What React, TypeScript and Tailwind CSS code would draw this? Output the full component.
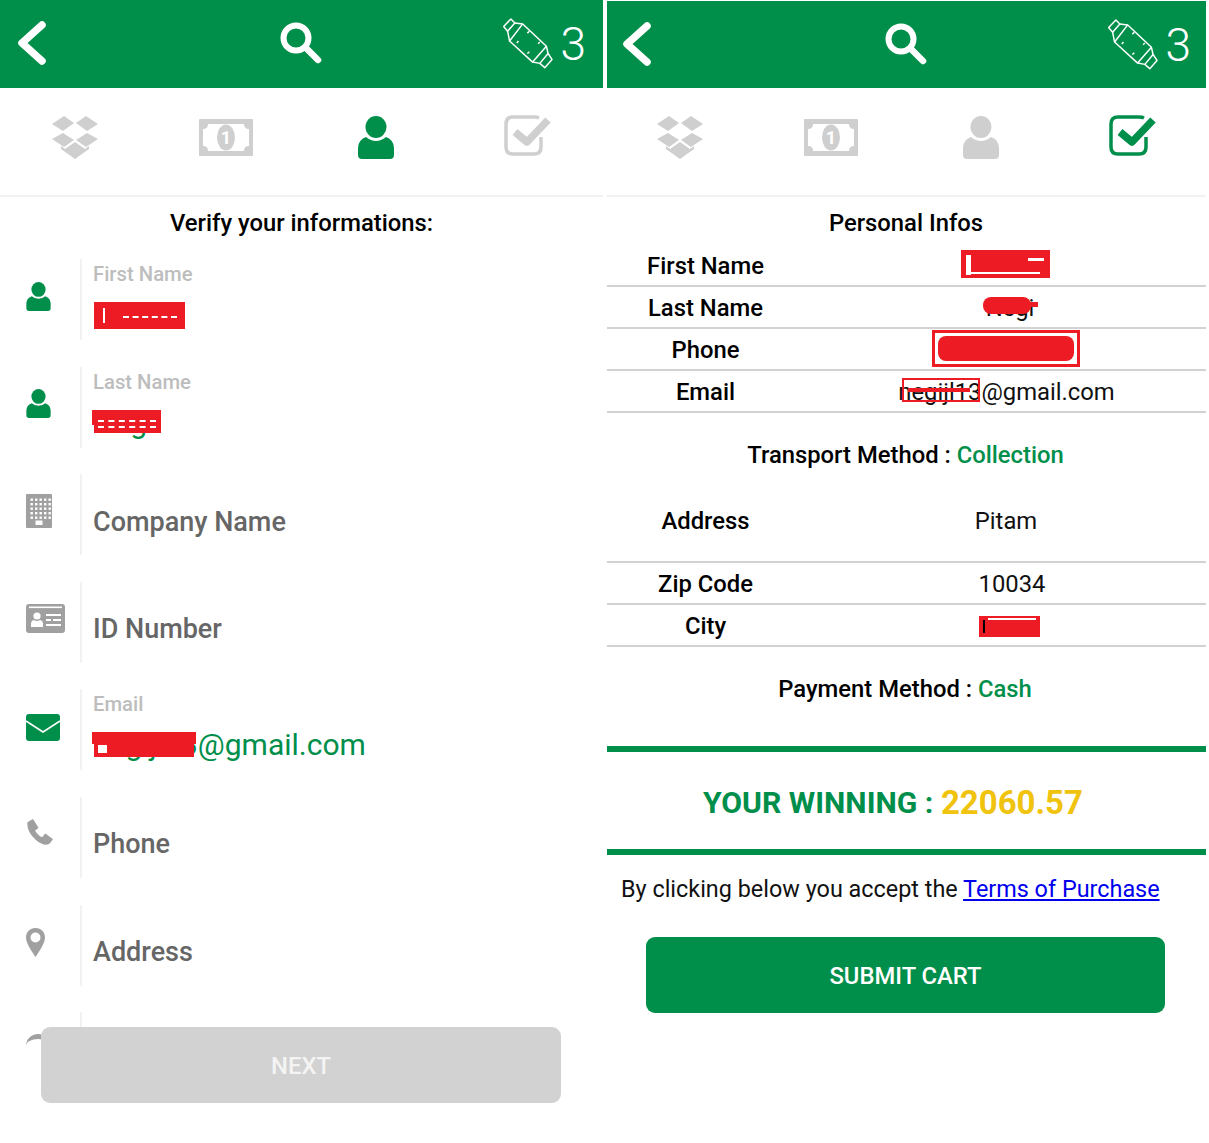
import React from 'react';

const Back = () => (
  <svg viewBox="0 0 28 44" className="w-[28px] h-[44px]" fill="none" stroke="#fff" strokeWidth="7.5" strokeLinecap="round" strokeLinejoin="round">
    <polyline points="24,4 4,22 24,40" />
  </svg>
);

const Search = () => (
  <svg viewBox="0 0 42 42" className="w-[42px] h-[42px] -ml-[1px]" fill="none" stroke="#fff">
    <circle cx="16" cy="16" r="12.5" strokeWidth="6" />
    <line x1="26" y1="26" x2="38" y2="38" strokeWidth="6.5" strokeLinecap="round" />
  </svg>
);

const Bottle = () => (
  <svg viewBox="38 50 152 156" className="w-[50px] h-[52px]" fill="none" stroke="#fff" strokeWidth="4.5" strokeLinejoin="round">
    <path d="M52 92 L40 78 L62 55 L74 67 Z" />
    <path d="M74 67 L98 70 L170 138 L175 160 L187 178 L165 203 L150 190 L128 186 L58 122 L52 92" />
    <path d="M58 122 L98 70 M128 186 L170 138 M150 190 L175 160" />
    <path d="M112 98 L118 92 M145 130 L150 125 M80 128 L85 122 M112 160 L118 155" />
  </svg>
);

const Dropbox = ({ color }: { color: string }) => (
  <svg viewBox="0 0 46 43" className="w-[46px] h-[43px]" fill={color}>
    <polygon points="12,0 22,7 11,15 0,8" />
    <polygon points="34,0 46,8 35,15 24,7" />
    <polygon points="11,17 22,24 12,31 0,23" />
    <polygon points="35,17 46,23 34,31 24,24" />
    <polygon points="23,26 33,33 37,30 37,33 23,43 9,33 9,30 13,33" />
  </svg>
);

const Money = ({ color }: { color: string }) => (
  <svg viewBox="0 0 54 37" className="w-[54px] h-[37px]">
    <rect width="54" height="37" rx="1" fill={color} />
    <path d="M9 5 H45 Q45 10 50 10 V27 Q45 27 45 32 H9 Q9 27 4 27 V10 Q9 10 9 5 Z" fill="#fff" />
    <ellipse cx="27" cy="18.5" rx="9" ry="13" fill={color} />
    <text x="27" y="25" textAnchor="middle" fontSize="18" fontWeight="700" fill="#fff" fontFamily="Roboto, sans-serif">1</text>
  </svg>
);

const User = ({ color, size = 'w-[36px] h-[43px]' }: { color: string; size?: string }) => (
  <svg viewBox="0 0 36 43" className={size} fill={color}>
    <ellipse cx="18" cy="11" rx="10.5" ry="11" />
    <path d="M4 43 Q0 43 0 39 V32 Q0 24 8 21 Q13 25 18 25 Q23 25 28 21 Q36 24 36 32 V39 Q36 43 32 43 Z" />
  </svg>
);

const Check = ({ color }: { color: string }) => (
  <svg viewBox="0 0 47 41" className="w-[47px] h-[41px]" fill="none" stroke={color} strokeLinejoin="round">
    <path d="M37 22 V32 Q37 39 30 39 H9 Q2 39 2 32 V9 Q2 2 9 2 H30 Q33 2 35 3" strokeWidth="3.5" />
    <polyline points="11,17 23,27 44,5" strokeWidth="7.5" />
  </svg>
);

const Building = () => (
  <svg viewBox="0 0 26 34" className="w-[26px] h-[34px]">
    <rect width="26" height="34" rx="1" fill="#a0a0a0" />
    {[5, 9.5, 14, 18.5, 23].map((y) =>
      [5, 9.5, 14, 18.5, 23].map((x) => <rect key={`${x}-${y}`} x={x - 0.5} y={y - 0.5} width="2.4" height="2.4" fill="#fff" />)
    )}
    <rect x="9.5" y="26.5" width="7" height="4.5" fill="#fff" />
  </svg>
);

const IdCard = () => (
  <svg viewBox="0 0 39 29" className="w-[39px] h-[29px]">
    <rect width="39" height="29" rx="3" fill="#a0a0a0" />
    <rect x="3" y="2.5" width="33" height="1.6" fill="#fff" />
    <circle cx="11" cy="12" r="3.6" fill="#fff" />
    <path d="M5 23 V20 Q5 16.5 8 16 Q11 18 14 16 Q17 16.5 17 20 V23 Z" fill="#fff" />
    <rect x="20" y="10" width="15" height="2" fill="#fff" />
    <rect x="20" y="15" width="5" height="2" fill="#fff" />
    <rect x="27" y="15" width="8" height="2" fill="#fff" />
    <rect x="20" y="20" width="15" height="2" fill="#fff" />
  </svg>
);

const Envelope = () => (
  <svg viewBox="0 0 34 27" className="w-[34px] h-[27px]">
    <rect width="34" height="27" rx="3" fill="#008f4b" />
    <polyline points="0,7 17,18 34,7" fill="none" stroke="#fff" strokeWidth="1.5" />
  </svg>
);

const Phone = () => (
  <svg viewBox="0 0 28 28" className="w-[27px] h-[27px]" fill="#a0a0a0" stroke="#a0a0a0" strokeLinejoin="round" strokeWidth="1.5">
    <path d="M2 4 L7 1 L12 9 L8.5 12 Q12 18 17 20 L20 16 L27 21 L24 25 Q19 28 11 21.5 Q2 14 2 4 Z" />
  </svg>
);

const Pin = () => (
  <svg viewBox="0 0 19 29" className="w-[19px] h-[29px]" fill="#a0a0a0">
    <path fillRule="evenodd" d="M9.5 0 C15 0 19 4 19 9.5 C19 15 13 24 9.5 29 C6 24 0 15 0 9.5 C0 4 4 0 9.5 0 Z M9.5 4.5 A5 5 0 1 0 9.5 14.5 A5 5 0 1 0 9.5 4.5 Z" />
  </svg>
);

const Header = () => (
  <div className="grid grid-cols-3 items-center w-[603px] h-full pb-[2px]">
    <div className="pl-[18px] flex">
      <Back />
    </div>
    <div className="flex justify-center">
      <Search />
    </div>
    <div className="flex justify-end items-center pr-[17px] gap-[7px] text-white">
      <Bottle />
      <span className="text-[46px] font-light leading-none mt-[2px]">3</span>
    </div>
  </div>
);

const Tabs = ({ active }: { active: 'user' | 'check' }) => (
  <div className="grid grid-cols-4 items-center w-[603px] h-[107px] pb-[8px]">
    <div className="flex justify-center">
      <Dropbox color="#cfcfcf" />
    </div>
    <div className="flex justify-center">
      <Money color="#cfcfcf" />
    </div>
    <div className="flex justify-center pr-[2px]">
      <User color={active === 'user' ? '#008f4b' : '#cfcfcf'} />
    </div>
    <div className="flex justify-center pb-[4px]">
      <Check color={active === 'check' ? '#008f4b' : '#cfcfcf'} />
    </div>
  </div>
);

const Field = ({
  icon,
  iconTop,
  label,
  placeholder,
  children,
}: {
  icon: React.ReactNode;
  iconTop: string;
  label?: string;
  placeholder?: string;
  children?: React.ReactNode;
}) => (
  <div className="flex h-[81px] mb-[26.6px]">
    <div className={`w-[80px] shrink-0 pl-[26px] ${iconTop}`}>{icon}</div>
    <div className="w-[2px] bg-[#f2f2f2]" />
    <div className="pl-[11px] flex-1">
      {label && <div className="text-[20.3px] leading-[24px] mt-[3px] mb-[1px] font-medium text-[#bdbdbd]">{label}</div>}
      {placeholder && <div className="text-[27px] leading-[32px] mt-[31.5px] font-medium text-[#666666]">{placeholder}</div>}
      {children}
    </div>
  </div>
);

const TableRow = ({ label, value, tall, offset = '' }: { label: string; value?: React.ReactNode; tall?: boolean; offset?: string }) => (
  <div className={`grid grid-cols-[197px_1fr] items-center border-b-2 border-[#d2d2d2] text-[23.8px] ${tall ? 'h-[64px] pb-[16px]' : 'h-[42px] pt-[3px]'}`}>
    <div className="text-center font-medium text-black">{label}</div>
    <div className={`relative text-center text-[#111111] ${offset}`}>{value}</div>
  </div>
);

const RedBar = ({ className }: { className: string }) => <div className={`absolute bg-[#ed1c24] ${className}`} />;

export default function App() {
  return (
    <div className="flex w-[1209px] h-[1143px] overflow-hidden bg-white font-['Roboto',sans-serif]">
      {/* left screen */}
      <div className="relative w-[603px] h-full shrink-0 overflow-hidden">
        <div className="h-[88px] bg-[#008f4b]">
          <Header />
        </div>
        <div className="border-b-2 border-[#f2f2f2]">
          <Tabs active="user" />
        </div>
        <div className="text-center text-[23.8px] font-medium text-black h-[62px] pt-[9px]">Verify your informations:</div>
        <Field icon={<User color="#008f4b" size="w-[25px] h-[29px]" />} iconTop="pt-[23px]" label="First Name">
          <div className="relative h-[53px]">
            <RedBar className="left-[1px] top-[15px] w-[91px] h-[27px]" />
            <div className="absolute left-[30px] top-[29px] w-[54px] border-t-2 border-dashed border-white" />
            <div className="absolute left-[10px] top-[21px] w-[2px] h-[15px] bg-white" />
          </div>
        </Field>
        <Field icon={<User color="#008f4b" size="w-[25px] h-[29px]" />} iconTop="pt-[22px]" label="Last Name">
          <div className="relative h-[53px] text-[30px] leading-[36px] text-[#008f4b] pt-[10px]">
            Negi
            <RedBar className="-left-[1px] top-[15px] w-[69px] h-[15px]" />
            <RedBar className="left-[1px] top-[15px] w-[67px] h-[23px]" />
            <div className="absolute left-[5px] top-[25px] w-[58px] border-t-2 border-dashed border-white" />
            <div className="absolute left-[5px] top-[31px] w-[58px] border-t-2 border-dashed border-white" />
          </div>
        </Field>
        <Field icon={<Building />} iconTop="pt-[20px]" placeholder="Company Name" />
        <Field icon={<IdCard />} iconTop="pt-[22px]" placeholder="ID Number" />
        <Field icon={<Envelope />} iconTop="pt-[25px]" label="Email">
          <div className="relative h-[53px] text-[30px] leading-[36px] text-[#008f4b] pt-[10px] whitespace-nowrap">
            negijl13@gmail.com
            <RedBar className="-left-[1px] top-[15px] w-[104px] h-[12px]" />
            <RedBar className="left-[1px] top-[25px] w-[100px] h-[15px]" />
            <div className="absolute left-[5px] top-[28px] w-[9px] h-[8px] bg-white" />
          </div>
        </Field>
        <Field icon={<Phone />} iconTop="pt-[22px]" placeholder="Phone" />
        <Field icon={<Pin />} iconTop="pt-[23px]" placeholder="Address" />
        <Field icon={<div className="w-[24px] h-[24px] rounded-full border-t-[5px] border-[#a0a0a0]" />} iconTop="pt-[22px]" />
        <div className="absolute left-[41px] top-[1027px] w-[520px] h-[76px] pt-[3px] rounded-[9px] bg-[#d2d2d2] flex items-center justify-center text-[23.8px] font-medium text-[#f4f4f4]">
          NEXT
        </div>
      </div>

      {/* right screen */}
      <div className="w-[599px] h-full ml-[4px] shrink-0 overflow-hidden">
        <div className="h-[87px] mt-[1px] bg-[#008f4b] overflow-hidden">
          <div className="-ml-[2px] h-full">
            <Header />
          </div>
        </div>
        <div className="border-b-2 border-[#f2f2f2] overflow-hidden">
          <div className="-ml-[2px]">
            <Tabs active="check" />
          </div>
        </div>
        <div className="text-center text-[23.8px] font-medium text-black h-[48px] pt-[9px] pr-[1px]">Personal Infos</div>
        <TableRow
          label="First Name"
          value={
            <div className="h-[28px]">
              <div className="absolute left-[157px] -top-[3px] w-[89px] h-[28px] border-2 border-[#ed1c24] bg-[#ed1c24]">
                <div className="absolute left-[3px] top-[3px] w-[5px] h-[20px] bg-white" />
                <div className="absolute left-[3px] bottom-[2px] w-[74px] h-[2px] bg-white" />
                <div className="absolute left-[65px] top-[6px] w-[16px] h-[3px] bg-white" />
              </div>
            </div>
          }
        />
        <TableRow
          label="Last Name"
          offset="pl-[10px]"
          value={
            <div className="relative">
              Negi
              <RedBar className="left-[169px] top-[6px] w-[48px] h-[17px] rounded-[8px]" />
              <RedBar className="left-[200px] top-[11px] w-[24px] h-[5px]" />
            </div>
          }
        />
        <TableRow
          label="Phone"
          value={
            <div className="h-[28px]">
              <div className="absolute left-[128px] -top-[7px] w-[148px] h-[37px] border-[3px] border-[#ed1c24] p-[3px]">
                <div className="h-full bg-[#ed1c24] rounded-[8px]" />
              </div>
            </div>
          }
        />
        <TableRow
          label="Email"
          offset="pl-[3px]"
          value={
            <div className="relative">
              negijl13@gmail.com
              <div className="absolute left-[95px] top-[3px] w-[78px] h-[24px] border-2 border-[#ed1c24]">
                <div className="absolute left-[4px] top-[8px] w-[62px] h-[4px] bg-[#ed1c24]" />
              </div>
            </div>
          }
        />
        <div className="h-[86px] flex items-center justify-center text-[23.8px] font-medium text-black pr-[2px]">
          Transport Method :&nbsp;<span className="text-[#008f4b]">Collection</span>
        </div>
        <TableRow label="Address" value="Pitam" tall offset="pl-[2px]" />
        <TableRow label="Zip Code" value="10034" offset="pl-[14px]" />
        <TableRow
          label="City"
          value={
            <div className="h-[28px]">
              <RedBar className="left-[175px] top-[3px] w-[61px] h-[21px]" />
              <div className="absolute left-[179px] top-[7px] w-[2px] h-[13px] bg-black" />
              <div className="absolute left-[184px] top-[5px] w-[48px] h-[2px] bg-white" />
            </div>
          }
        />
        <div className="h-[99px] flex items-center justify-center text-[23.8px] font-medium text-black pb-[13px] pr-[3px]">
          Payment Method :&nbsp;<span className="text-[#008f4b]">Cash</span>
        </div>
        <div className="h-[6px] bg-[#008f4b]" />
        <div className="h-[97px] flex items-center justify-center text-[30.2px] font-bold text-[#008f4b] pt-[5px] pr-[27px]">
          YOUR WINNING :&nbsp;<span className="text-[33px] text-[#f0c30f]">22060.57</span>
        </div>
        <div className="h-[6px] bg-[#008f4b]" />
        <div className="pl-[14px] pt-[19px] text-[23.4px] leading-[30px] text-[#111111] whitespace-nowrap">
          By clicking below you accept the <span className="text-[#0000ee] underline">Terms of Purchase</span>
        </div>
        <div className="ml-[39px] mt-[33px] w-[519px] h-[76px] pt-[3px] rounded-[9px] bg-[#008f4b] flex items-center justify-center text-[23.8px] font-medium text-white">
          SUBMIT CART
        </div>
      </div>
    </div>
  );
}
